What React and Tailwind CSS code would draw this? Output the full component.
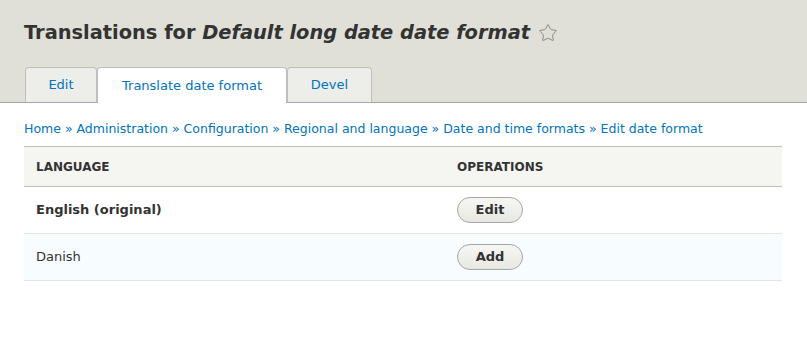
import { Star } from "lucide-react";

const crumbs = [
  "Home",
  "Administration",
  "Configuration",
  "Regional and language",
  "Date and time formats",
  "Edit date format",
];

const rows = [
  { lang: "English (original)", bold: true, op: "Edit", bg: "bg-white" },
  { lang: "Danish", bold: false, op: "Add", bg: "bg-[#f7fcff]" },
];

function Tab({ label, active }) {
  return (
    <a
      href="#"
      className={
        "h-[35px] flex items-center justify-center border border-b-0 rounded-t-[4px] text-[13px] text-[#0074bd] " +
        (active
          ? "bg-white border-[#bfbfba] mb-[-1px] h-[36px]"
          : "bg-[#ededea] border-[#bfbfba]")
      }
    >
      {label}
    </a>
  );
}

export default function App() {
  return (
    <div className="w-[807px] h-[343px] bg-white font-['DejaVu_Sans',sans-serif] text-[#333]">
      <div className="bg-[#e0e0d8] border-b border-[#a6a6a6] pt-[17px] px-6">
        <h1 className="flex items-center text-[19.4px] font-bold leading-[32px]">
          <span>
            Translations for <em>Default long date date format</em>
          </span>
          <Star size={20} strokeWidth={1.2} className="ml-2 text-[#8a8a80]" />
        </h1>
        <nav className="flex mt-[18px] ml-px">
          <div className="w-[72px]"><Tab label="Edit" /></div>
          <div className="w-[190px]"><Tab label="Translate date format" active /></div>
          <div className="w-[85px]"><Tab label="Devel" /></div>
        </nav>
      </div>

      <div className="px-6">
        <div className="pt-[17px] pb-[8px] text-[12.5px] text-[#0074bd] leading-[18px]">
          {crumbs.map((c, i) => (
            <span key={c}>
              {i > 0 && " » "}
              <a href="#">{c}</a>
            </span>
          ))}
        </div>

        <table className="w-[758px] table-fixed border-collapse text-[13px]">
          <thead>
            <tr className="bg-[#f5f5f2] border-y border-[#bfbfba]">
              <th className="h-[40px] w-[433px] text-left pl-3 text-[12px] font-bold uppercase">
                Language
              </th>
              <th className="text-left text-[12px] font-bold uppercase">Operations</th>
            </tr>
          </thead>
          <tbody>
            {rows.map((r) => (
              <tr key={r.lang} className={r.bg + " border-b border-[#e6e4df]"}>
                <td className={"h-[47px] pl-3 " + (r.bold ? "font-bold" : "")}>{r.lang}</td>
                <td>
                  <button className="w-[66px] h-[26px] rounded-full border border-[#a6a6a6] bg-gradient-to-b from-[#f6f6f3] to-[#e8e8e3] text-[13px] font-bold text-[#333]">
                    {r.op}
                  </button>
                </td>
              </tr>
            ))}
          </tbody>
        </table>
      </div>
    </div>
  );
}
